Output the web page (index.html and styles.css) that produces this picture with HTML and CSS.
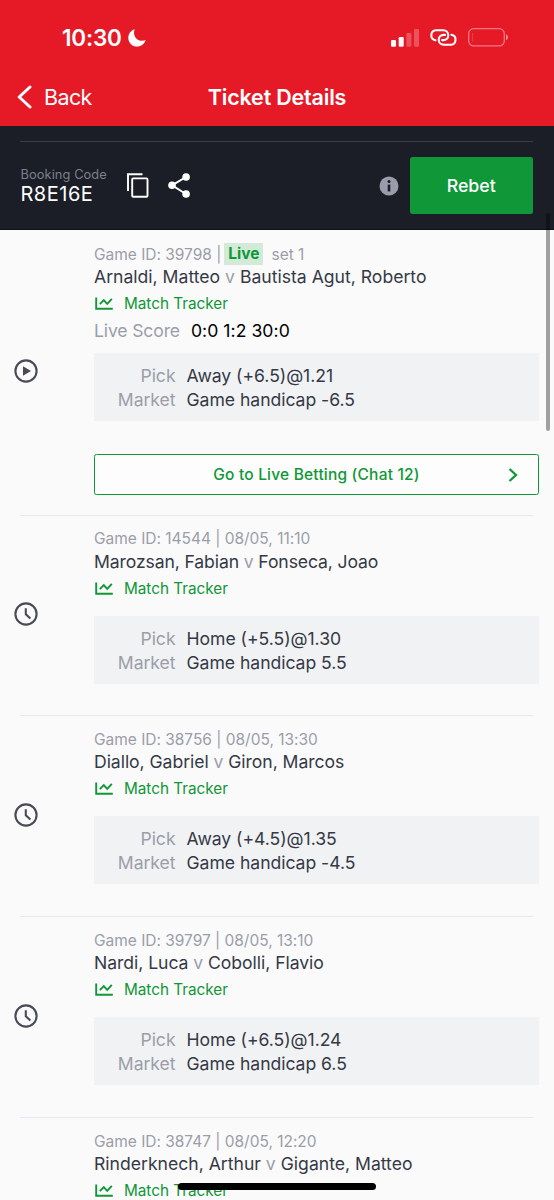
FILE: index.html
```
<!DOCTYPE html>
<html lang="en">
<head>
<meta charset="utf-8">
<title>Ticket Details</title>
<link rel="stylesheet" href="styles.css">
</head>
<body>
<svg class="defs" aria-hidden="true">
  <symbol id="chart" viewBox="0 0 18 13"><path d="M1.2 0.4V11.8H17.8M4.8 7.2L8.8 3.2L12.2 6.8L16.8 1.8" fill="none" stroke="currentColor" stroke-width="1.9"/></symbol>
  <symbol id="clock" viewBox="0 0 24 24"><circle cx="12" cy="12" r="10.6" fill="none" stroke="currentColor" stroke-width="2.1"/><path d="M11.8 6.3V12.3L16.4 16.6" fill="none" stroke="currentColor" stroke-width="2.1"/></symbol>
  <symbol id="play" viewBox="0 0 24 24"><circle cx="12" cy="12" r="10.6" fill="none" stroke="currentColor" stroke-width="2.1"/><path d="M9 7.2V16.8L17 12Z" fill="currentColor"/></symbol>
</svg>
<div class="screen">
  <header class="top">
    <div class="status">
      <div class="status-left">
        <span class="time">10:30</span>
        <svg class="moon" viewBox="0 0 18 18"><path d="M6.6 0.3C4.9 5.2 7 11.6 13.7 11.8C15.2 11.8 16.4 11.6 17.6 11.1C16.4 15 13.2 17.6 9.2 17.6C4.2 17.6 0.3 13.8 0.3 9C0.3 5 2.8 1.6 6.6 0.3Z" fill="#fff"/></svg>
      </div>
      <div class="status-right">
        <svg class="signal" viewBox="0 0 28 18"><rect x="0" y="11" width="5" height="6.7" rx="1.2" fill="#fff"/><rect x="7.7" y="8" width="5" height="9.7" rx="1.2" fill="#fff"/><rect x="15.4" y="4" width="5" height="13.7" rx="1.2" fill="#fff" opacity=".25"/><rect x="23" y="0" width="5" height="17.7" rx="1.2" fill="#fff" opacity=".25"/></svg>
        <svg class="link" viewBox="0 0 27 17"><g fill="none" stroke="#fff" stroke-width="2.1" stroke-linecap="round"><path d="M5.4 11.2A5 5 0 0 1 6 1.3H13.4A4.9 4.9 0 0 1 13.4 11.1H12"/><path d="M21.4 5.8A5 5 0 0 1 21 15.7H13.6A4.9 4.9 0 0 1 13.6 5.9H15"/></g></svg>
        <svg class="battery" viewBox="0 0 41 19"><rect x=".7" y=".7" width="35.6" height="17.2" rx="5" fill="none" stroke="#fff" stroke-width="1.3" opacity=".42"/><path d="M4.5 5V13.6" stroke="#fff" stroke-width="1" opacity=".15"/><path d="M38 6.3C40.6 7.2 40.6 11.4 38 12.3Z" fill="#fff" opacity=".5"/></svg>
      </div>
    </div>
    <nav class="nav">
      <div class="back"><svg class="chev" viewBox="0 0 15 24"><path d="M13 2L2.2 12L13 22" fill="none" stroke="#fff" stroke-width="3" stroke-linecap="round" stroke-linejoin="round"/></svg><span class="back-text">Back</span></div>
      <h1 class="title">Ticket Details</h1>
      <div></div>
    </nav>
  </header>
  <section class="booking">
    <div class="booking-row">
      <div class="code">
        <span class="code-label">Booking Code</span>
        <span class="code-value">R8E16E</span>
      </div>
      <svg class="copy" viewBox="0 0 22 25"><path d="M1 18V1.2H15.5" fill="none" stroke="#fff" stroke-width="1.9"/><rect x="5.2" y="5.4" width="15.3" height="18.4" rx="1" fill="none" stroke="#fff" stroke-width="1.9"/></svg>
      <svg class="share" viewBox="0 0 22 25"><path d="M18 4L4 12.3L18 21" fill="none" stroke="#fff" stroke-width="2"/><g fill="#fff"><circle cx="18.1" cy="4" r="3.8"/><circle cx="4" cy="12.3" r="3.8"/><circle cx="18.1" cy="21" r="3.8"/></g></svg>
      <svg class="info" viewBox="0 0 20 20"><circle cx="10" cy="10" r="9.5" fill="#9b9cab"/><circle cx="10" cy="5.4" r="1.5" fill="#1b1e26"/><path d="M10 8.6V15.4" stroke="#1b1e26" stroke-width="2.6"/></svg>
      <button class="rebet">Rebet</button>
    </div>
  </section>
  <main class="list">
    <article class="game live-game">
      <svg class="state"><use href="#play"/></svg>
      <div class="body">
        <div class="meta"><span class="meta-id">Game ID: 39798 |</span><span class="live">Live</span><span class="set">set 1</span></div>
        <div class="teams">Arnaldi, Matteo <i>v</i> Bautista Agut, Roberto</div>
        <div class="tracker"><svg class="chart"><use href="#chart"/></svg><span>Match Tracker</span></div>
        <div class="score"><span class="score-label">Live Score</span><span class="score-value">0:0 1:2 30:0</span></div>
        <dl class="pick"><dt>Pick</dt><dd>Away (+6.5)@1.21</dd><dt>Market</dt><dd>Game handicap -6.5</dd></dl>
        <button class="betting"><span>Go to Live Betting (Chat 12)</span><svg class="go" viewBox="0 0 10 14"><path d="M1.5 1L8 7L1.5 13" fill="none" stroke="currentColor" stroke-width="2.3"/></svg></button>
      </div>
    </article>
    <article class="game">
      <svg class="state"><use href="#clock"/></svg>
      <div class="body">
        <div class="meta">Game ID: 14544 | 08/05, 11:10</div>
        <div class="teams tight">Marozsan, Fabian <i>v</i> Fonseca, Joao</div>
        <div class="tracker"><svg class="chart"><use href="#chart"/></svg><span>Match Tracker</span></div>
        <dl class="pick"><dt>Pick</dt><dd>Home (+5.5)@1.30</dd><dt>Market</dt><dd>Game handicap 5.5</dd></dl>
      </div>
    </article>
    <article class="game">
      <svg class="state"><use href="#clock"/></svg>
      <div class="body">
        <div class="meta">Game ID: 38756 | 08/05, 13:30</div>
        <div class="teams snug">Diallo, Gabriel <i>v</i> Giron, Marcos</div>
        <div class="tracker"><svg class="chart"><use href="#chart"/></svg><span>Match Tracker</span></div>
        <dl class="pick"><dt>Pick</dt><dd>Away (+4.5)@1.35</dd><dt>Market</dt><dd>Game handicap -4.5</dd></dl>
      </div>
    </article>
    <article class="game">
      <svg class="state"><use href="#clock"/></svg>
      <div class="body">
        <div class="meta">Game ID: 39797 | 08/05, 13:10</div>
        <div class="teams snug">Nardi, Luca <i>v</i> Cobolli, Flavio</div>
        <div class="tracker"><svg class="chart"><use href="#chart"/></svg><span>Match Tracker</span></div>
        <dl class="pick"><dt>Pick</dt><dd>Home (+6.5)@1.24</dd><dt>Market</dt><dd>Game handicap 6.5</dd></dl>
      </div>
    </article>
    <article class="game">
      <div class="state"></div>
      <div class="body">
        <div class="meta">Game ID: 38747 | 08/05, 12:20</div>
        <div class="teams">Rinderknech, Arthur <i>v</i> Gigante, Matteo</div>
        <div class="tracker"><svg class="chart"><use href="#chart"/></svg><span>Match Tracker</span></div>
      </div>
    </article>
  </main>
  <div class="scrollbar"></div>
  <div class="home-bar"></div>
</div>
</body>
</html>
```
FILE: styles.css
```
* { box-sizing: border-box; }
body { margin: 0; font-family: Inter, "Liberation Sans", sans-serif; color: #353945; background: #fafafb; }
button { font-family: inherit; }
.defs { position: absolute; width: 0; height: 0; }
.screen { position: relative; width: 554px; height: 1200px; overflow: hidden; background: #fafafb; }

.top { height: 126px; background: #e61927; color: #fff; }
.status { display: flex; justify-content: space-between; align-items: center; height: 70px; padding: 5px 45px 0 62px; }
.status-left { display: flex; align-items: center; gap: 6px; }
.time { font-size: 22.5px; font-weight: 600; letter-spacing: -0.2px; }
.moon { width: 18px; height: 18px; }
.status-right { display: flex; align-items: center; }
.signal { width: 28px; height: 18px; margin-right: 11px; }
.link { width: 27px; height: 17px; margin-right: 11px; }
.battery { width: 41px; height: 19px; }
.nav { display: grid; grid-template-columns: 1fr auto 1fr; align-items: center; height: 54px; padding: 0 17px; }
.back { display: flex; align-items: center; gap: 12px; }
.chev { width: 15px; height: 24px; }
.back-text { font-size: 21.5px; letter-spacing: -0.6px; }
.title { margin: 0; font-size: 21.5px; font-weight: 600; letter-spacing: -0.2px; }

.booking { height: 104px; padding: 15px 21px 0 20px; background: #1b1e26; border-bottom: 1px solid #101218; }
.booking-row { display: flex; align-items: center; height: 88px; border-top: 1px solid #3a3d46; }
.code { display: flex; flex-direction: column; width: 107px; padding-left: 0.5px; }
.code-label { font-size: 12.8px; line-height: 17px; letter-spacing: 0.1px; color: #7d808c; white-space: nowrap; }
.code-value { font-size: 20px; line-height: 22px; letter-spacing: 0.5px; color: #fff; }
.copy { width: 22px; height: 25px; }
.share { width: 22px; height: 25px; margin-left: 19px; }
.info { width: 20px; height: 20px; margin-left: auto; margin-right: 11px; }
.rebet { width: 123.5px; height: 57px; border: 0; border-radius: 2.5px; background: #109737; color: #fff; font-size: 17.8px; font-weight: 500; }

.game { display: flex; align-items: center; height: 200.8px; margin: 0 15px 0 14px; }
.game + .game { background: linear-gradient(#e8e9ee, #e8e9ee) 6px 0 / 513px 1px no-repeat; }
.live-game { height: 284.7px; }
.state { width: 24px; height: 24px; margin-bottom: 2px; flex: none; color: #484b56; }
.body { align-self: stretch; margin-left: 56px; flex: 1; padding-top: 13px; white-space: nowrap; }
.meta { display: flex; align-items: center; height: 22px; font-size: 15.5px; letter-spacing: -0.02px; color: #9b9ea9; }
.live { margin: 0 8px 0 3px; padding: 0 4px; line-height: 22px; background: #d3ead9; color: #109737; font-weight: 700; }
.teams { height: 23px; line-height: 23px; font-size: 17.6px; }
.teams.tight { letter-spacing: -0.12px; }
.teams.snug { letter-spacing: -0.05px; }
.teams i { font-style: normal; color: #9b9ea9; }
.tracker { display: flex; align-items: center; height: 23px; margin-top: 4px; font-size: 15.3px; letter-spacing: -0.02px; color: #109737; }
.chart { width: 18px; height: 13px; margin: 0 11px 0 1px; }
.score { display: flex; gap: 11px; height: 26px; line-height: 26px; margin-top: 3px; font-size: 17.6px; }
.score-label { color: #9b9ea9; letter-spacing: -0.15px; }
.score-value { color: #000; letter-spacing: 0.05px; }
.pick { display: grid; grid-template-columns: 81.5px auto; column-gap: 11px; grid-auto-rows: 24px; margin: 16px 0 0; height: 68px; padding-top: 11px; background: #f1f2f4; line-height: 24px; font-size: 17.6px; letter-spacing: -0.04px; }
.score + .pick { margin-top: 9px; }
.pick dt { text-align: right; color: #9b9ea9; }
.pick dd { margin: 0; }
.betting { display: grid; grid-template-columns: 1fr auto 1fr; align-items: center; width: 100%; height: 41px; margin-top: 33px; padding: 0 20px; border: 1.4px solid #109737; border-radius: 2.5px; background: #fcfdfc; color: #109737; font-size: 15.5px; font-weight: 500; letter-spacing: 0.2px; }
.betting span { grid-column: 2; }
.go { width: 10px; height: 14px; justify-self: end; }

.scrollbar { position: absolute; left: 546px; top: 213px; width: 4px; height: 218px; border-radius: 2px; background: rgba(0, 0, 0, .36); }
.home-bar { position: absolute; left: 178px; top: 1183px; width: 198px; height: 7px; border-radius: 4px; background: #000; }
```
